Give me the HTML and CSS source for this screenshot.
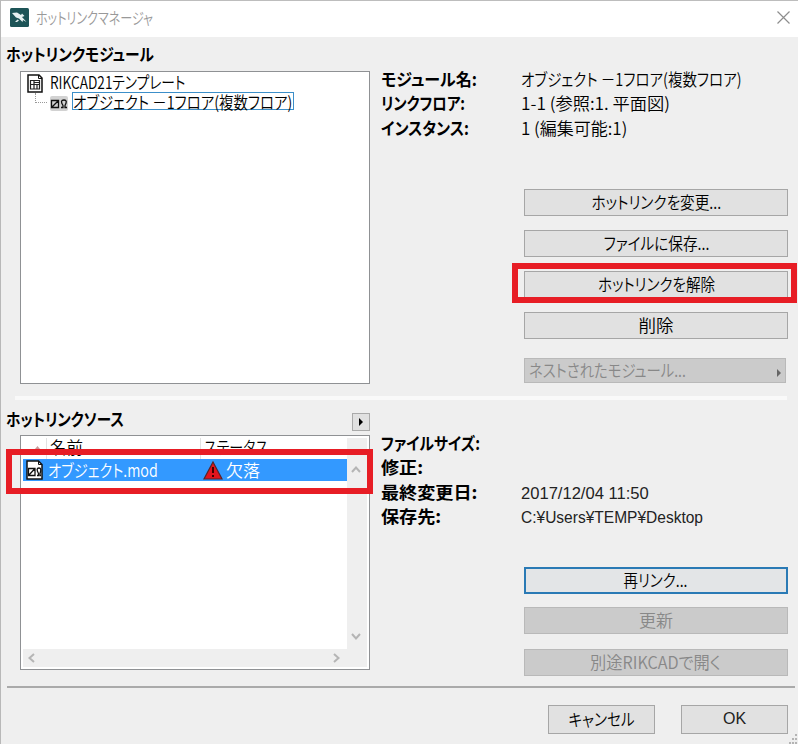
FILE: index.html
```
<!DOCTYPE html>
<html lang="ja">
<head>
<meta charset="utf-8">
<title>ホットリンクマネージャ</title>
<link rel="stylesheet" href="styles.css">
</head>
<body>
<div class="window">
  <header class="titlebar">
    <svg class="app-icon" width="19" height="19" viewBox="0 0 19 19"><rect width="19" height="19" rx="1.5" fill="#1d5457"/><path d="M2 5L7 4.500L11 7L12 5.500L14.500 8L12 9L16.500 14L13 12L12.500 14L9 10.500L6 9.500ZM5 14L7.500 11.500L9 12.500L7 14Z" fill="#e6f1f1"/></svg>
    <h1><span class="t t-title">ホットリンクマネージャ</span></h1>
    <svg class="close" width="13" height="13" viewBox="0 0 13 13"><path d="M.5.5L12.500 12.500M12.500.5L.5 12.500" stroke="#8d8d8d" stroke-width="1.200"/></svg>
  </header>
  <main>
    <section class="modules">
      <div class="left">
        <h2><span class="t t-modules">ホットリンクモジュール</span></h2>
        <div class="tree">
          <div class="node"><svg width="16" height="19" viewBox="0 0 16 19"><path d="M1 1H12L15 4V18H1Z" fill="#fff" stroke="#111" stroke-width="1.500"/><path d="M11.500 1V4.500H15" fill="none" stroke="#111"/><path d="M3.500 6.500H12.500V15H3.500ZM3.500 10.500H12.500M7 6.500V15M10 10.500V15M7 8.500H12" fill="none" stroke="#222" stroke-width="1.200"/></svg><span class="t t-root">RIKCAD21テンプレート</span></div>
          <div class="node child"><i class="branch"></i><svg width="18" height="15" viewBox="0 0 18 15"><rect width="18" height="15" rx="2" fill="#d2d2d2"/><path d="M1.500 4.500H8.500V11.500H1.500ZM1.500 11.500L8.500 4.500M11 11.500H13V9.500Q9.500 4 14 4Q18 4 15 9.500V11.500H17" fill="none" stroke="#111" stroke-width="1.300"/></svg><span class="focus"><span class="t t-child">オブジェクト －1フロア(複数フロア)</span></span></div>
        </div>
      </div>
      <div class="right">
        <dl>
          <dt><span class="t t-k1">モジュール名:</span></dt><dd><span class="t t-v1">オブジェクト －1フロア(複数フロア)</span></dd>
          <dt><span class="t t-k2">リンクフロア:</span></dt><dd><span class="t t-v2">1-1 (参照:1. 平面図)</span></dd>
          <dt><span class="t t-k3">インスタンス:</span></dt><dd><span class="t t-v3">1 (編集可能:1)</span></dd>
        </dl>
        <div class="actions">
          <button><span class="t t-b1">ホットリンクを変更...</span></button>
          <button><span class="t t-b2">ファイルに保存...</span></button>
          <button class="marked"><span class="t t-b3">ホットリンクを解除</span></button>
          <button><span class="t t-b4">削除</span></button>
          <button class="nested" disabled><span class="t t-b5">ネストされたモジュール...</span><svg width="4" height="8" viewBox="0 0 4 8"><path d="M0 0L4 4L0 8Z" fill="#666"/></svg></button>
        </div>
      </div>
    </section>
    <hr class="soft">
    <section class="sources">
      <div class="left">
        <h2><span class="t t-sources">ホットリンクソース</span><button class="more"><svg width="4" height="8" viewBox="0 0 4 8"><path d="M0 0L4 4L0 8Z" fill="#000"/></svg></button></h2>
        <div class="list">
          <div class="table">
            <div class="thead"><span class="sort"><svg width="5" height="3" viewBox="0 0 5 3"><path d="M0 3L2.500 0L5 3Z" fill="#c99"/></svg></span><span class="c-name"><span class="t t-h1">名前</span></span><span class="c-status"><span class="t t-h2">ステータス</span></span></div>
            <div class="row"><svg width="17" height="20" viewBox="0 0 17 20"><path d="M1 1H12.500L16 4.500V19H1Z" fill="#fff" stroke="#111" stroke-width="1.500"/><path d="M12.500 1V4.500H16" fill="none" stroke="#111"/><path d="M2.500 8.500H9V15.500H2.500ZM2.500 15.500L9 8.500M11 15.500H12.500V13.500Q9.500 8 13 8Q16 8 14 13.500V15.500H15" fill="none" stroke="#111" stroke-width="1.300"/></svg><span class="c-file"><span class="t t-file">オブジェクト.mod</span></span><svg width="20" height="19" viewBox="0 0 20 19"><path d="M10 1L19 18H1Z" fill="#e3141d" stroke="#56252b" stroke-width="1.200"/><path d="M10 6V12M10 14V16" stroke="#400" stroke-width="2"/></svg><span class="c-state"><span class="t">欠落</span></span></div>
          </div>
          <div class="vbar"><svg width="10" height="7" viewBox="0 0 10 7"><path d="M1 6L5 1.500L9 6" /></svg><svg width="10" height="7" viewBox="0 0 10 7"><path d="M1 1L5 5.500L9 1"/></svg></div>
          <div class="hbar"><svg width="7" height="10" viewBox="0 0 7 10"><path d="M6 1L1.500 5L6 9"/></svg><svg width="7" height="10" viewBox="0 0 7 10"><path d="M1 1L5.500 5L1 9"/></svg></div>
          <i class="mark"></i>
        </div>
      </div>
      <div class="right">
        <dl>
          <dt><span class="t t-k4">ファイルサイズ:</span></dt><dd></dd>
          <dt><span class="t t-k5">修正:</span></dt><dd></dd>
          <dt><span class="t t-k6">最終変更日:</span></dt><dd><span class="t latin t-v6">2017/12/04 11:50</span></dd>
          <dt><span class="t t-k7">保存先:</span></dt><dd><span class="t latin t-v7">C:¥Users¥TEMP¥Desktop</span></dd>
        </dl>
        <div class="actions">
          <button class="default"><span class="t t-b6">再リンク...</span></button>
          <button class="update" disabled><span class="t">更新</span></button>
          <button disabled><span class="t t-b8">別途RIKCADで開く</span></button>
        </div>
      </div>
    </section>
  </main>
  <footer><button><span class="t t-b9">キャンセル</span></button><button><span class="t latin">OK</span></button></footer>
  <svg class="grip" width="10" height="10" viewBox="0 0 10 10"><path d="M7 0h2v2h-2zM4 4h2v2h-2zM7 4h2v2h-2zM1 8h2v2h-2zM4 8h2v2h-2zM7 8h2v2h-2z" fill="#b4b4b4"/></svg>
</div>
</body>
</html>
```

FILE: styles.css
```
*, *::after { box-sizing: border-box; }
body { margin: 0; width: 800px; height: 744px; overflow: hidden; background: #fff; color: #000; font: 350 17px/24px "Noto Sans CJK JP", sans-serif; }
svg { display: block; flex: none; }

/* Condensed proportional kana */
.t { display: inline-block; white-space: nowrap; font-feature-settings: "palt"; transform-origin: left; }
.latin { font-family: "Liberation Sans", sans-serif; font-size: 16px; color: #222; }
button .t { transform-origin: center; margin-top: -1px; }
.t-title { transform: scaleX(.754); }
.t-modules { transform: scaleX(.87); }
.t-root { transform: scaleX(.807); }
.t-child { transform: scaleX(.85); }
.t-k1 { transform: scaleX(.944); }
.t-v1 { transform: scaleX(.855); }
.t-k2 { transform: scaleX(.849); }
.t-v2 { transform: scaleX(1.015); }
.t-k3 { transform: scaleX(.892); }
.t-b1, .t-b2 { transform: scaleX(.861); }
.t-b3, .t-sources { transform: scaleX(.855); }
.t-b4 { transform: scaleX(1.029); }
.t-b5 { transform: scaleX(.846); }
.t-h1 { transform: scaleX(.971); }
.t-h2 { transform: scaleX(.825); }
.t-file { transform: scaleX(.842); }
.t-k4 { transform: scaleX(.872); }
.t-k5, .t-k6, .t-k7 { transform: scaleX(1.065); }
.t-v6 { transform: scaleX(1.035); }
.t-v7 { transform: scaleX(.97); }
.t-b6 { transform: scaleX(.851); }
.t-b8 { transform: scaleX(.955); }
.t-b9 { transform: scaleX(.857); }

.window { position: relative; width: 798px; height: 744px; background: #efefef; border-left: 1px solid #b8b8b8; border-top: 1px solid #bdbdbd; display: flex; flex-direction: column; }
.titlebar { height: 36px; flex: none; background: #fff; display: flex; align-items: center; padding: 0 8px 3px 9px; }
h1 { margin: -2px auto 0 7px; font: inherit; font-size: 16px; line-height: 24px; color: #999; }
main { height: 649px; }
section { display: flex; }
.left { width: 369px; padding-left: 5px; }
.right { width: 407px; padding-left: 11px; }
h2 { margin: 0; height: 24px; font-size: 17px; font-weight: 700; line-height: 24px; display: flex; justify-content: space-between; align-items: center; }
.modules { height: 359px; padding-top: 5px; }
.modules h2 { margin-bottom: 5px; }
.tree { margin-left: 14px; height: 313px; width: 350px; background: #fff; border: 1px solid #8f9194; padding: 1px 6px; }
.node { height: 20px; display: flex; align-items: center; gap: 7px; line-height: 20px; }
.node .t { margin-top: -3px; }
.child { gap: 4px; padding-left: 8px; }
.child svg { margin-left: 2px; }
.branch { width: 12px; height: 10px; border: dotted #999; border-width: 0 0 1px 1px; margin: -10px -3px 0 0; }
.focus { width: 222px; height: 18px; margin-top: -4px; line-height: 18px; border: 1px solid #3c8fc9; }
dl { margin: 0; display: grid; grid-template-columns: 140px 1fr; grid-auto-rows: 24.300px; }
dt { font-weight: 700; }
dd { margin: 0; }
.modules .right { padding-top: 25px; }
.actions { margin-left: 143px; width: 264px; display: grid; gap: 14px; }
.modules .actions { margin-top: 49px; }
button { height: 27px; border: 1px solid #a6a6a6; background: #e1e1e1; color: inherit; font: inherit; line-height: 24px; padding: 0; display: flex; align-items: center; justify-content: center; }
button:disabled { background: #cbcbcb; border-color: #b9b9b9; color: #888; }
.marked { position: relative; }
.marked::after { content: ""; position: absolute; left: -13px; top: -9px; width: 285px; height: 40px; border: 6px solid #e71d25; }
.nested { margin-top: 5px; width: 262px; height: 25px; justify-content: space-between; padding: 0 4px; }
.nested svg { margin-top: 6px; }
.nested .t { transform-origin: left; }
.soft { height: 4px; margin: 0 11px 0 14px; border: 0; background: #f9f9f9; }
.sources { padding-top: 6px; }
.sources h2 { margin-bottom: 4px; height: 25px; }
.more { width: 18px; height: 18px; margin: 7px 0 0; border-color: #aaa; }
.list { position: relative; margin-left: 14px; width: 350px; height: 235px; border: 1px solid #8f9194; padding: 2px; background: #fff; display: grid; grid-template: 211px 1fr / 324px 1fr; }
.thead { height: 21px; display: grid; grid-template-columns: 23px 154px 1fr; line-height: 17px; }
.sort { padding: 8px 0 0 12px; }
.c-name, .c-status { border-left: 1px solid #e2e2e2; padding-left: 3px; }
.row { height: 22px; background: #3399ff; color: #fff; display: flex; align-items: center; padding-left: 3px; gap: 5px; line-height: 20px; }
.row .t { margin-top: -2px; }
.c-file { width: 150px; }
.c-state { width: 40px; margin-left: -2px; }
.vbar, .hbar { display: flex; justify-content: space-between; align-items: center; background: #efefef; }
.vbar { flex-direction: column; padding: 28px 2px 9px 0; }
.hbar { grid-column: 1 / 3; padding: 0 27px 0 5px; }
.vbar path, .hbar path { fill: none; stroke: #b5b5b5; stroke-width: 2; }
.mark { position: absolute; left: -15px; top: 13px; width: 367px; height: 45px; border: 6px solid #e71d25; }
.sources .right { padding-top: 25px; }
.sources .actions { margin-top: 39px; gap: 14px; }
.update { margin: -1px 0 1px; }
.default { border: 2px solid #2a7ab5; background: #e3e5e7; }
footer { flex: 1; margin: 0 3px 0 6px; border-top: 2px solid #aaa; padding: 17px 7px 0; display: flex; justify-content: flex-end; gap: 26px; }
footer button { width: 107px; height: 29px; }
.grip { position: absolute; right: 0; bottom: 0; }
```
